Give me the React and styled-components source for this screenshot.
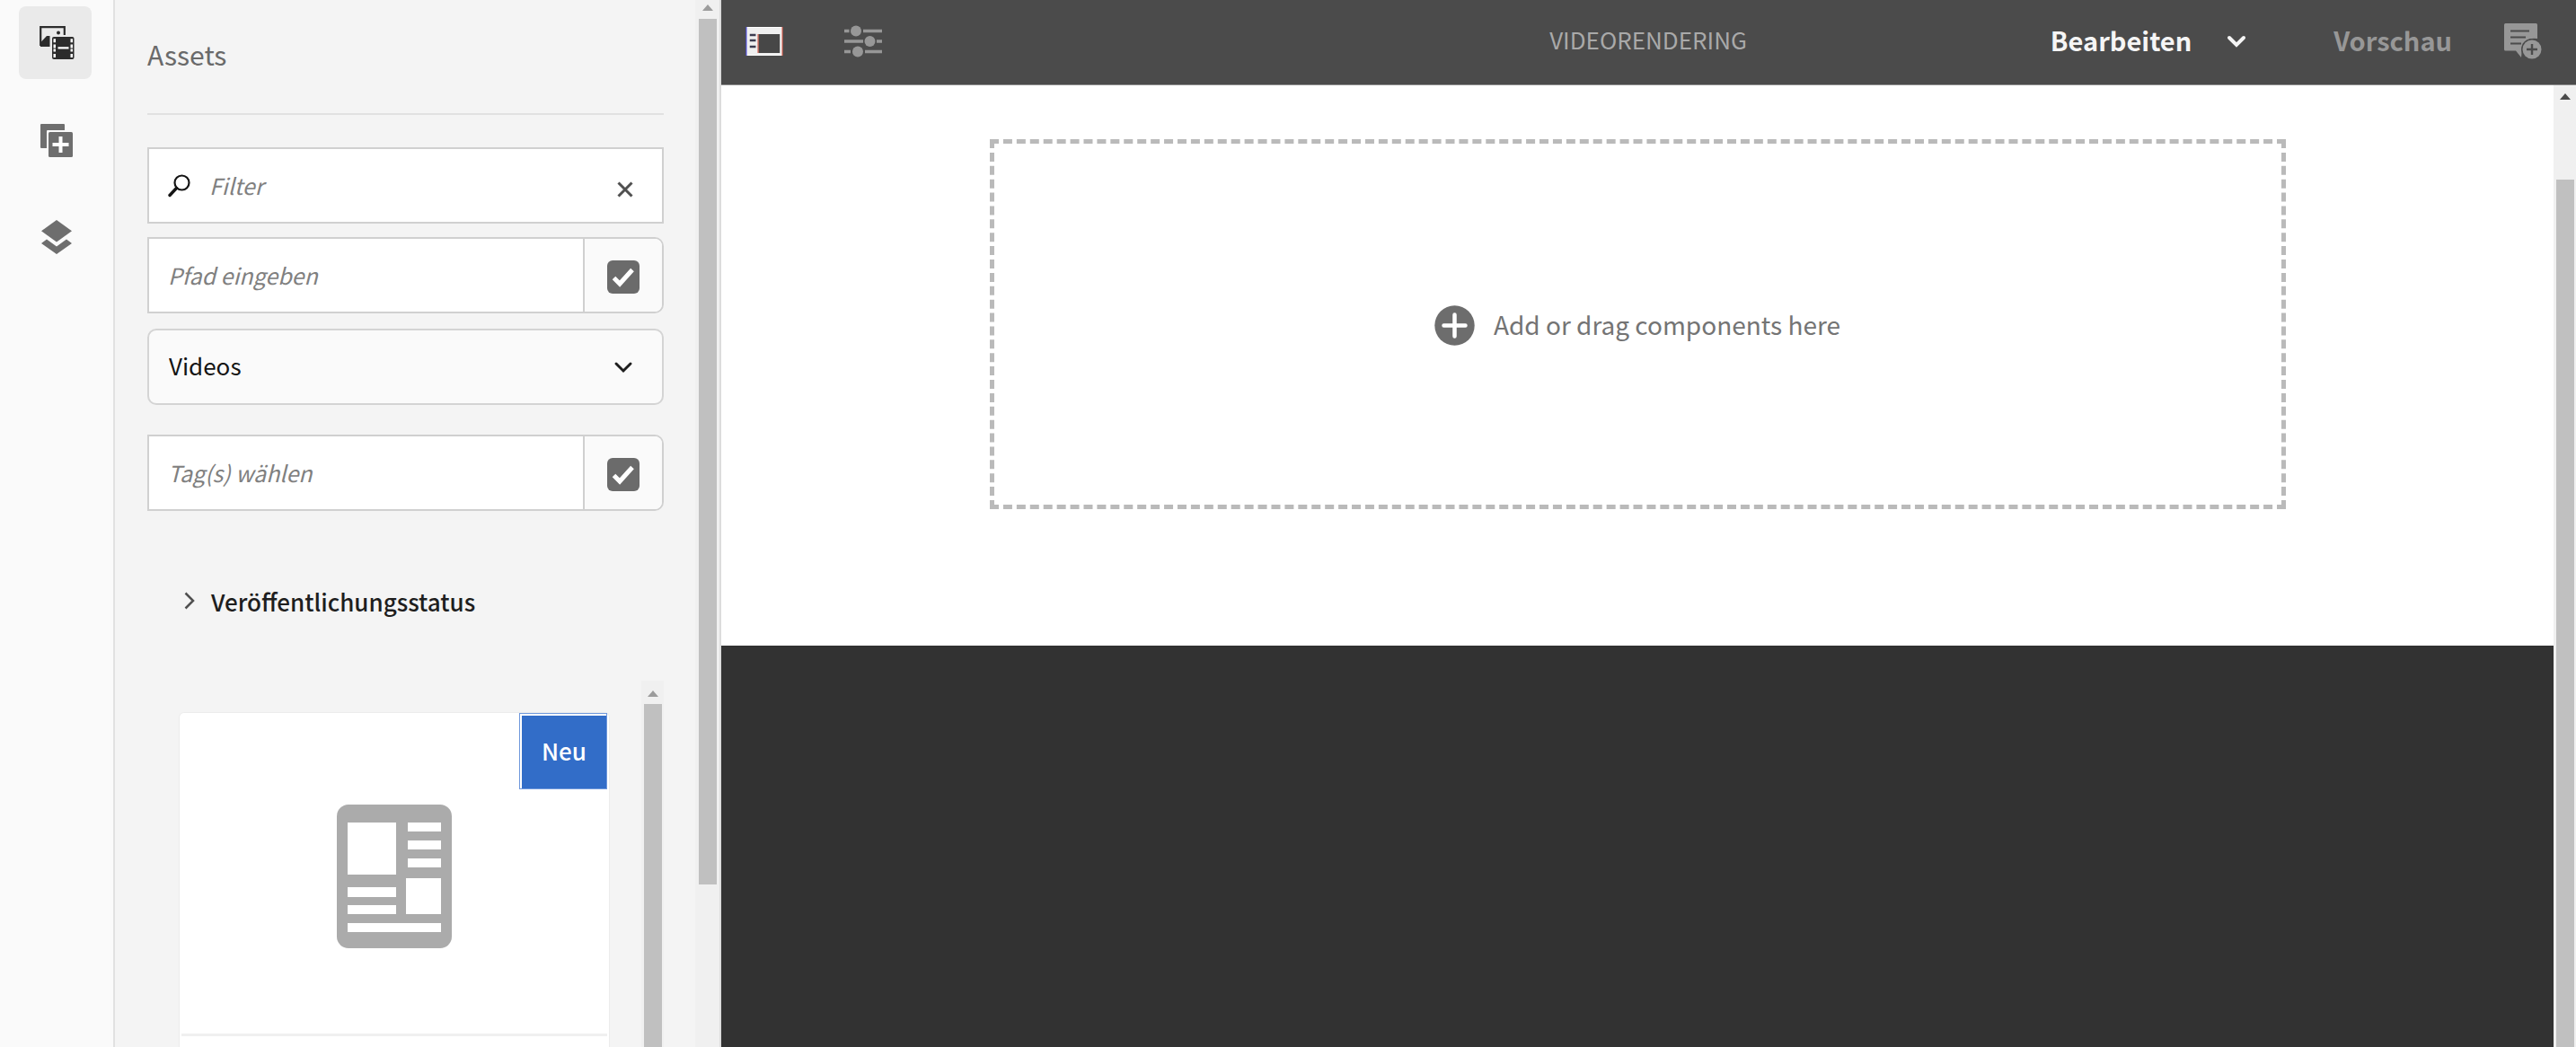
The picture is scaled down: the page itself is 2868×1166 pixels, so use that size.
import React, { useState } from "react";
import styled, { createGlobalStyle } from "styled-components";

const GlobalStyle = createGlobalStyle`
  *, *::before, *::after { box-sizing: border-box; }
  body {
    margin: 0;
    overflow: hidden;
    background: #ffffff;
  }
  body, button, input, select {
    font-family: "Noto Sans CJK SC", "Noto Sans", sans-serif;
    font-size: 26px;
  }
  button { cursor: pointer; }
  svg { display: block; flex: none; }
`;

const Shell = styled.div`
  display: flex;
  height: 100vh;
  overflow: hidden;
`;

/* Tab rail */

const Rail = styled.nav`
  flex: none;
  display: flex;
  flex-direction: column;
  align-items: center;
  gap: 27px;
  width: 128px;
  padding: 7px 4px 0 0;
  background: #fafafa;
  border-right: 2px solid #e1e1e1;
`;

const RailButton = styled.button`
  display: grid;
  place-items: center;
  width: 81px;
  height: 81px;
  padding: 0 0 0 4px;
  border: 0;
  border-radius: 8px;
  color: ${(p) => (p.$active ? "#2c2c2c" : "#6e6e6e")};
  background: ${(p) => (p.$active ? "#eaeaea" : "transparent")};
`;

/* Side panel */

const Side = styled.aside`
  flex: none;
  display: flex;
  width: 675px;
  background: #f4f4f4;
  border-right: 2px solid #dcdcdc;
`;

const SideBody = styled.div`
  flex: 1;
  min-width: 0;
  display: flex;
  flex-direction: column;
  padding: 0 35px 0 36px;
`;

const Heading = styled.h1`
  flex: none;
  height: 128px;
  margin: 0 0 36px;
  padding-top: 36px;
  border-bottom: 2px solid #e1e1e1;
  font-size: 30px;
  font-weight: 400;
  line-height: 48px;
  color: #6a6a6a;
`;

const Filters = styled.form`
  flex: none;
  display: flex;
  flex-direction: column;
  gap: 15px;
`;

const Field = styled.div`
  display: flex;
  align-items: center;
  height: 85px;
  overflow: hidden;
  background: #ffffff;
  border: 2px solid #d0d0d0;
  border-radius: ${(p) => (p.$picker ? "0 10px 10px 0" : "0")};
  padding-left: ${(p) => (p.$picker ? "0" : "21px")};
`;

const TextInput = styled.input`
  flex: 1;
  min-width: 0;
  height: 100%;
  padding: 0 21px 2px;
  border: 0;
  outline: 0;
  background: transparent;
  color: #1e1e1e;
  font-size: 25px;
  &::placeholder {
    color: #808080;
    font-style: italic;
    opacity: 1;
  }
`;

const ClearButton = styled.button`
  display: grid;
  place-items: center;
  width: 82px;
  height: 100%;
  padding: 8px 0 0;
  border: 0;
  background: transparent;
  color: #505050;
`;

const TickCell = styled.label`
  flex: none;
  display: grid;
  place-items: center;
  align-content: center;
  width: 88px;
  height: 100%;
  padding-top: 4px;
  background: #fafafa;
  border-left: 2px solid #d0d0d0;
  color: #ffffff;
  > * { grid-area: 1 / 1; }
  svg { pointer-events: none; }
`;

const Tick = styled.input`
  appearance: none;
  width: 36px;
  height: 37px;
  margin: 0;
  border-radius: 6px;
  background: #6b6b6b;
`;

const SelectBox = styled.label`
  display: grid;
  align-items: center;
  height: 85px;
  margin: 2px 0 18px;
  color: #1e1e1e;
  > * { grid-area: 1 / 1; }
  svg {
    justify-self: end;
    margin-right: 34px;
    pointer-events: none;
  }
`;

const Select = styled.select`
  appearance: none;
  width: 100%;
  height: 100%;
  padding: 0 22px 4px;
  color: #141414;
  background: #fafafa;
  border: 2px solid #d4d4d4;
  border-radius: 10px;
`;

const Disclosure = styled.button`
  flex: none;
  display: flex;
  align-items: center;
  gap: 18px;
  height: 80px;
  margin: 60px 0 49px;
  padding: 0 0 0 41px;
  border: 0;
  background: transparent;
  color: #1e1e1e;
  font-weight: 500;
`;

const Results = styled.div`
  flex: 1;
  min-height: 0;
  display: flex;
  justify-content: space-between;
`;

const Card = styled.article`
  flex: 1;
  display: flex;
  flex-direction: column;
  margin: 35px 35px 0;
  background: #ffffff;
  border: 1px solid #ececec;
  border-bottom: 0;
  border-radius: 6px 6px 0 0;
`;

const Preview = styled.div`
  flex: none;
  display: grid;
  grid-template-rows: 86px 1fr;
  height: 360px;
  margin: 0 2px;
  border-bottom: 3px solid #f0f0f0;
`;

const Badge = styled.span`
  justify-self: end;
  display: grid;
  place-items: center;
  width: 98px;
  height: 85px;
  padding: 0 0 2px 2px;
  border: 1px solid #6f98dc;
  box-shadow: inset 2px 2px 0 #ffffff;
  background: #326dc8;
  color: #ffffff;
  font-weight: 500;
`;

const PreviewIcon = styled.div`
  display: grid;
  justify-items: center;
  padding-top: 16px;
`;

/* Scrollbars */

const Track = styled.div`
  flex: none;
  display: flex;
  flex-direction: column;
  align-items: center;
  width: ${(p) => (p.$wide ? "27px" : "25px")};
  padding-top: ${(p) => p.$top}px;
  background: #f0f0f0;
`;

const Thumb = styled.div`
  flex: ${(p) => (p.$share ? "none" : "1")};
  width: 20px;
  height: ${(p) => p.$share || "auto"};
  margin-top: ${(p) => p.$gap}px;
  background: #c0c0c0;
`;

/* Editor */

const Editor = styled.main`
  flex: 1;
  min-width: 0;
  display: flex;
  flex-direction: column;
`;

const Toolbar = styled.header`
  flex: none;
  display: grid;
  grid-template-columns: 1fr auto 1fr;
  align-items: center;
  height: 95px;
  padding: 0 38px 3px 27px;
  background: #4b4b4b;
  border-bottom: 1px solid #8f8f8f;
`;

const ToolGroup = styled.div`
  display: flex;
  align-items: center;
  justify-content: ${(p) => (p.$end ? "flex-end" : "flex-start")};
  gap: ${(p) => (p.$end ? "58px" : "68px")};
`;

const ToolButton = styled.button`
  display: flex;
  align-items: center;
  gap: 39px;
  padding: 0;
  border: 0;
  background: transparent;
  font-size: 29px;
  font-weight: 700;
  line-height: 40px;
  color: ${(p) => (p.$bright ? "#f5f5f5" : "#979797")};
  margin-right: ${(p) => (p.$spaced ? "39px" : "0")};
`;

const ToolLabel = styled.span`
  padding-bottom: 4px;
`;

const Title = styled.h2`
  margin: 0;
  padding: 0 0 4px 10px;
  font-size: 26px;
  font-weight: 400;
  line-height: 40px;
  color: #a9a9a9;
`;

const Stage = styled.div`
  flex: 1;
  min-height: 0;
  display: flex;
  background: #323232;
`;

const Canvas = styled.div`
  flex: 1;
  min-width: 0;
`;

const Page = styled.section`
  display: flex;
  justify-content: center;
  padding: 60px 24px 152px;
  background: #ffffff;
`;

const DropZone = styled.button`
  display: flex;
  align-items: center;
  justify-content: center;
  gap: 21px;
  width: 100%;
  max-width: 1443px;
  height: 412px;
  padding: 2px 0 0;
  border: 5px dashed #bababa;
  background: transparent;
  color: #747474;
  font-size: 28px;
`;

const DropLabel = styled.span`
  padding-bottom: 2px;
`;

const Arrow = ({ color }) => (
  <svg width="12" height="7" viewBox="0 0 12 7" aria-hidden="true">
    <path d="M6 0l6 7H0z" fill={color} />
  </svg>
);

const Chevron = ({ width = 3 }) => (
  <svg width="22" height="14" viewBox="0 0 22 14" fill="none" stroke="currentColor" strokeWidth={width} strokeLinecap="round" aria-hidden="true">
    <path d="M3 3l8 8 8-8" />
  </svg>
);

const CheckMark = () => (
  <svg width="26" height="22" viewBox="0 0 26 22" fill="none" stroke="currentColor" strokeWidth="5" aria-hidden="true">
    <path d="M2.5 11.5l6.5 6.5L23 2.5" />
  </svg>
);

const AssetsIcon = () => (
  <svg width="39" height="38" viewBox="0 0 39 38" aria-hidden="true">
    <path d="M1.2 22V1.2h26.6V10" fill="none" stroke="currentColor" strokeWidth="2.2" />
    <path d="M1 23V18.5l7-7.5h3.5v12z" fill="currentColor" />
    <circle cx="21" cy="7.5" r="2" fill="currentColor" />
    <rect x="14" y="12" width="24.5" height="25" rx="2" fill="currentColor" />
    <path d="M15.5 14.2h2.500v4h-2.500zM15.5 20.5h2.500v4h-2.500zM15.5 25.5h2.500v3h-2.500zM15.5 31h2.500v4h-2.500zM34.5 14.2h2.500v4h-2.500zM34.5 20.5h2.500v4h-2.500zM34.5 25.5h2.500v3h-2.500zM34.5 31h2.500v4h-2.500zM20.5 23.2h12v2.300h-12z" fill="#fff" />
  </svg>
);

const AddComponentIcon = () => (
  <svg width="38" height="38" viewBox="0 0 38 38" fill="currentColor" aria-hidden="true">
    <path d="M2 1h25a1 1 0 0 1 1 1v6H9q-1 0-1 1v19H2a1 1 0 0 1-1-1V2a1 1 0 0 1 1-1z" />
    <rect x="10" y="10" width="27" height="28" rx="1.5" />
    <path d="M21.5 15h4v7h7v4h-7v7h-4v-7h-7v-4h7z" fill="#fff" />
  </svg>
);

const LayersIcon = () => (
  <svg width="34" height="38" viewBox="0 0 34 38" fill="currentColor" aria-hidden="true">
    <path d="M17 0l17 12.3L17 24.5 0 12.3z" />
    <path d="M6 21.5l11 8 11-8 6 4.5-17 12L0 26z" />
  </svg>
);

const SearchIcon = () => (
  <svg width="25" height="26" viewBox="0 0 25 26" fill="none" stroke="#141414" aria-hidden="true">
    <circle cx="15.5" cy="9.5" r="8" strokeWidth="2.2" />
    <path d="M9.5 15.5L2 23.5" strokeWidth="3.4" strokeLinecap="round" />
  </svg>
);

const CloseIcon = () => (
  <svg width="18" height="18" viewBox="0 0 18 18" stroke="currentColor" strokeWidth="3" aria-hidden="true">
    <path d="M1.5 1.5l15 15M16.5 1.5l-15 15" />
  </svg>
);

const PanelIcon = () => (
  <svg width="42" height="34" viewBox="0 0 44 34" preserveAspectRatio="none" aria-hidden="true">
    <rect x="1" y="1" width="42" height="32" fill="#fff" />
    <rect x="2" y="2" width="40" height="30" fill="#f0f0f0" />
    <rect x="15" y="9" width="25" height="21" fill="#474747" />
    <path d="M5 10h7M5 16h7M5 23h7" stroke="#3c3c50" strokeWidth="2.5" />
    <path d="M1 1v32" stroke="#4b4bd8" strokeWidth="1.2" />
    <path d="M14.7 9v21M43 1v32" stroke="#d25a4a" strokeWidth="1.2" />
  </svg>
);

const SlidersIcon = () => (
  <svg width="42" height="36" viewBox="0 0 42 36" fill="currentColor" stroke="currentColor" strokeWidth="3.5" aria-hidden="true">
    <path d="M0 6.5h5.500M21 6.500h21M0 18h21M36 18h6M0 29.500h7M23 29.500h19" />
    <g stroke="none">
      <circle cx="13" cy="6.5" r="6" />
      <circle cx="28.5" cy="18" r="6" />
      <circle cx="15" cy="29.5" r="6" />
    </g>
  </svg>
);

const AnnotateIcon = () => (
  <svg width="42" height="40" viewBox="0 0 42 40" aria-hidden="true">
    <path d="M1.5 0h34a1.500 1.500 0 0 1 1.500 1.500V17q-15-2-17 11l-1 10-6-7.500H1.500A1.500 1.500 0 0 1 0 29V1.500A1.500 1.500 0 0 1 1.500 0z" fill="currentColor" />
    <path d="M7 8.500h21M7 15.500h17M7 22.500h12" stroke="#4b4b4b" strokeWidth="2.2" />
    <circle cx="31" cy="29" r="12" fill="#4b4b4b" />
    <circle cx="31" cy="29" r="10.5" fill="currentColor" />
    <path d="M31 23v12M25 29h12" stroke="#4b4b4b" strokeWidth="2.4" />
  </svg>
);

const AddCircleIcon = () => (
  <svg width="45" height="45" viewBox="0 0 45 45" aria-hidden="true">
    <circle cx="22.5" cy="22.5" r="22.2" fill="#6d6d6d" />
    <path d="M22.5 10.5v24M10.500 22.500h24" stroke="#fff" strokeWidth="4.5" strokeLinecap="round" />
  </svg>
);

const DocumentIcon = () => (
  <svg width="128" height="160" viewBox="0 0 128 160" aria-hidden="true">
    <rect width="128" height="160" rx="13" fill="#ababab" />
    <path d="M12 20h54v58H12zM79 20h37v10H79zM79 40h37v10H79zM79 60h37v10H79zM77 82h39v40H77zM12 92h54v11H12zM12 112h54v10H12zM12 132h104v10H12z" fill="#fff" />
  </svg>
);

const railTabs = [
  { name: "Assets", icon: <AssetsIcon /> },
  { name: "Komponenten", icon: <AddComponentIcon /> },
  { name: "Inhaltsstruktur", icon: <LayersIcon /> },
];

function PickerField({ placeholder }) {
  return (
    <Field $picker>
      <TextInput type="text" placeholder={placeholder} aria-label={placeholder} />
      <TickCell>
        <Tick type="checkbox" defaultChecked aria-label={placeholder} />
        <CheckMark />
      </TickCell>
    </Field>
  );
}

export default function App() {
  const [tab, setTab] = useState("Assets");

  return (
    <Shell>
      <GlobalStyle />
      <Rail>
        {railTabs.map((t) => (
          <RailButton key={t.name} type="button" aria-label={t.name} $active={t.name === tab} onClick={() => setTab(t.name)}>
            {t.icon}
          </RailButton>
        ))}
      </Rail>

      <Side>
        <SideBody>
          <Heading>Assets</Heading>
          <Filters onSubmit={(e) => e.preventDefault()}>
            <Field>
              <SearchIcon />
              <TextInput type="text" placeholder="Filter" aria-label="Filter" />
              <ClearButton type="reset" aria-label="Filter löschen">
                <CloseIcon />
              </ClearButton>
            </Field>
            <PickerField placeholder="Pfad eingeben" />
            <SelectBox>
              <Select defaultValue="videos" aria-label="Asset-Typ">
                <option value="videos">Videos</option>
              </Select>
              <Chevron />
            </SelectBox>
            <PickerField placeholder="Tag(s) wählen" />
          </Filters>
          <Disclosure type="button" aria-expanded="false">
            <svg width="12" height="20" viewBox="0 0 12 20" fill="none" stroke="#505050" strokeWidth="2.5" aria-hidden="true">
              <path d="M1.5 1.5l8.500 8.500-8.500 8.500" />
            </svg>
            Veröffentlichungsstatus
          </Disclosure>
          <Results>
            <Card>
              <Preview>
                <Badge>Neu</Badge>
                <PreviewIcon>
                  <DocumentIcon />
                </PreviewIcon>
              </Preview>
            </Card>
            <Track $top={11}>
              <Arrow color="#9c9c9c" />
              <Thumb $gap={8} />
            </Track>
          </Results>
        </SideBody>
        <Track $wide $top={5}>
          <Arrow color="#9c9c9c" />
          <Thumb $gap={9} $share="83%" />
        </Track>
      </Side>

      <Editor>
        <Toolbar>
          <ToolGroup>
            <ToolButton type="button" aria-label="Seitenbereich umschalten">
              <PanelIcon />
            </ToolButton>
            <ToolButton type="button" aria-label="Seiteninformationen">
              <SlidersIcon />
            </ToolButton>
          </ToolGroup>
          <Title>VIDEORENDERING</Title>
          <ToolGroup $end>
            <ToolButton type="button" $bright $spaced>
              <ToolLabel>Bearbeiten</ToolLabel>
              <Chevron width={4} />
            </ToolButton>
            <ToolButton type="button">
              <ToolLabel>Vorschau</ToolLabel>
            </ToolButton>
            <ToolButton type="button" aria-label="Anmerkung hinzufügen">
              <AnnotateIcon />
            </ToolButton>
          </ToolGroup>
        </Toolbar>
        <Stage>
          <Canvas>
            <Page>
              <DropZone type="button">
                <AddCircleIcon />
                <DropLabel>Add or drag components here</DropLabel>
              </DropZone>
            </Page>
          </Canvas>
          <Track $top={9}>
            <Arrow color="#4b4b4b" />
            <Thumb $gap={89} />
          </Track>
        </Stage>
      </Editor>
    </Shell>
  );
}
